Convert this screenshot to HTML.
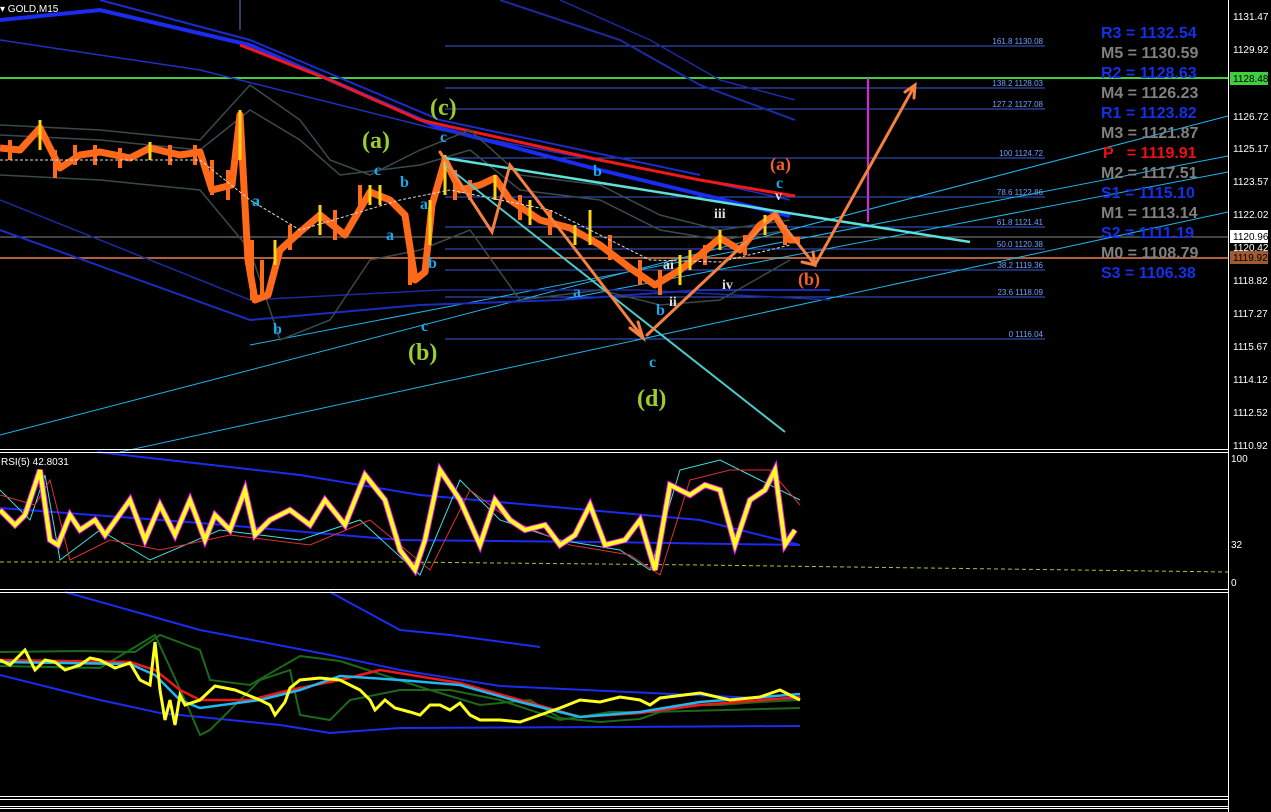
<!DOCTYPE html>
<html><head><meta charset="utf-8"><style>
html,body{margin:0;padding:0;background:#000;width:1271px;height:812px;overflow:hidden}
svg{display:block}
.ax{font-family:"Liberation Sans",sans-serif;font-size:10px;fill:#fff}
.pv{font-family:"Liberation Sans",sans-serif;font-size:16px;font-weight:bold}
.fb{font-family:"Liberation Sans",sans-serif;font-size:8px;fill:#6fa0ff}
.wv{font-family:"Liberation Serif",serif;font-weight:bold}
</style></head><body>
<svg width="1271" height="812" viewBox="0 0 1271 812" xmlns="http://www.w3.org/2000/svg">
<rect width="1271" height="812" fill="#000"/>
<g stroke="#3c5ad8" stroke-width="1">
<line x1="445" y1="46" x2="1045" y2="46"/>
<line x1="445" y1="88" x2="1045" y2="88"/>
<line x1="445" y1="109" x2="1045" y2="109"/>
<line x1="445" y1="158" x2="1045" y2="158"/>
<line x1="445" y1="197" x2="1045" y2="197"/>
<line x1="445" y1="227" x2="1045" y2="227"/>
<line x1="445" y1="249" x2="1045" y2="249"/>
<line x1="445" y1="270" x2="1045" y2="270"/>
<line x1="445" y1="297" x2="1045" y2="297"/>
<line x1="445" y1="339" x2="1045" y2="339"/>
</g>
<g class="fb" text-anchor="end">
<text x="1043" y="44">161.8 1130.08</text>
<text x="1043" y="86">138.2 1128.03</text>
<text x="1043" y="107">127.2 1127.08</text>
<text x="1043" y="156">100 1124.72</text>
<text x="1043" y="195">78.6 1122.86</text>
<text x="1043" y="225">61.8 1121.41</text>
<text x="1043" y="247">50.0 1120.38</text>
<text x="1043" y="268">38.2 1119.36</text>
<text x="1043" y="295">23.6 1118.09</text>
<text x="1043" y="337">0 1116.04</text>
</g>
<line x1="0" y1="78" x2="1228" y2="78" stroke="#3fcf3f" stroke-width="2"/>
<line x1="0" y1="237" x2="1228" y2="237" stroke="#888" stroke-width="1"/>
<line x1="0" y1="258" x2="1228" y2="258" stroke="#b0603a" stroke-width="2"/>
<g stroke="#1fb4e8" stroke-width="1" fill="none">
<line x1="0" y1="435" x2="1228" y2="116"/>
<line x1="250" y1="345" x2="1228" y2="156"/>
<line x1="120" y1="452" x2="1228" y2="212"/>
<line x1="560" y1="300" x2="1228" y2="172"/>
</g>
<g fill="none">
<path d="M0,20 L100,10 L250,45 L440,128 L600,170 L790,216" stroke="#1a2cf0" stroke-width="4"/>
<path d="M0,40 L200,70 L440,130 L700,180 L790,200" stroke="#2030c0" stroke-width="1.5"/>
<path d="M100,0 L250,40 L440,120 L700,175" stroke="#1a2cd0" stroke-width="2"/>
<path d="M500,0 L620,40 L700,85 L795,120" stroke="#1a2aa0" stroke-width="2"/>
<path d="M560,0 L650,40 L720,80 L795,100" stroke="#1a2aa0" stroke-width="1.5"/>
<path d="M0,230 L250,320 L420,305 L560,300 L700,290 L830,290" stroke="#1a2cc0" stroke-width="2"/>
<path d="M0,200 L250,300 L440,290 L640,290 L830,300" stroke="#1a2aa0" stroke-width="1.5"/>
<path d="M240,45 L330,80 L420,120 L600,160 L700,180 L795,196" stroke="#f01818" stroke-width="3"/>
</g>
<g fill="none" stroke="#3a4a4a" stroke-width="1.5">
<path d="M0,125 L100,130 L200,140 L250,85 L300,120 L330,160 L370,175 L420,150 L470,130 L520,175 L600,185 L660,215 L720,230 L790,220"/>
<path d="M0,175 L100,180 L200,190 L250,250 L280,340 L330,320 L370,260 L420,250 L470,230 L520,300 L600,290 L660,305 L720,300 L790,260"/>
<path d="M0,135 L100,140 L200,150 L250,110 L300,140 L340,175 L420,165 L470,150 L520,190 L600,200 L660,230 L720,240 L790,230"/>
</g>
<polyline fill="none" stroke="#ff6a1a" stroke-width="7" stroke-linejoin="round" points="0,148 20,150 40,128 60,168 80,155 100,152 130,158 150,148 180,155 200,152 212,190 232,185 240,115 248,260 255,300 268,295 280,250 300,232 320,215 345,235 370,192 390,200 405,215 415,280 425,272 432,205 445,160 460,190 480,185 495,178 510,200 540,220 570,228 600,245 630,268 655,285 680,270 700,255 720,238 740,250 760,225 775,215 790,240 800,240"/>
<g stroke="#ff6a1a" stroke-width="4">
<line x1="10" y1="140" x2="10" y2="160"/><line x1="55" y1="150" x2="55" y2="178"/><line x1="75" y1="145" x2="75" y2="165"/>
<line x1="95" y1="145" x2="95" y2="165"/><line x1="120" y1="148" x2="120" y2="168"/><line x1="170" y1="145" x2="170" y2="165"/>
<line x1="195" y1="145" x2="195" y2="165"/><line x1="212" y1="160" x2="212" y2="195"/><line x1="228" y1="170" x2="228" y2="200"/>
<line x1="252" y1="240" x2="252" y2="300"/><line x1="262" y1="260" x2="262" y2="295"/><line x1="290" y1="225" x2="290" y2="250"/>
<line x1="335" y1="210" x2="335" y2="240"/><line x1="360" y1="185" x2="360" y2="210"/><line x1="410" y1="240" x2="410" y2="285"/>
<line x1="455" y1="170" x2="455" y2="200"/><line x1="470" y1="180" x2="470" y2="200"/><line x1="520" y1="195" x2="520" y2="220"/>
<line x1="550" y1="210" x2="550" y2="235"/><line x1="610" y1="235" x2="610" y2="260"/><line x1="640" y1="260" x2="640" y2="285"/>
<line x1="660" y1="270" x2="660" y2="295"/><line x1="705" y1="245" x2="705" y2="265"/><line x1="745" y1="235" x2="745" y2="255"/>
<line x1="785" y1="225" x2="785" y2="245"/>
</g>
<g stroke="#ffd21a" stroke-width="3">
<line x1="40" y1="120" x2="40" y2="150"/><line x1="150" y1="142" x2="150" y2="160"/><line x1="240" y1="110" x2="240" y2="160"/>
<line x1="320" y1="205" x2="320" y2="235"/><line x1="370" y1="185" x2="370" y2="205"/><line x1="430" y1="200" x2="430" y2="245"/>
<line x1="445" y1="155" x2="445" y2="195"/><line x1="495" y1="175" x2="495" y2="200"/><line x1="590" y1="210" x2="590" y2="245"/>
<line x1="680" y1="255" x2="680" y2="285"/><line x1="720" y1="230" x2="720" y2="250"/><line x1="765" y1="215" x2="765" y2="235"/>
<line x1="275" y1="240" x2="275" y2="265"/><line x1="380" y1="185" x2="380" y2="205"/><line x1="530" y1="200" x2="530" y2="225"/>
<line x1="575" y1="225" x2="575" y2="245"/><line x1="690" y1="250" x2="690" y2="270"/>
</g>
<path d="M0,160 L200,160 L250,200 L300,230 L400,200 L450,190 L550,210 L650,260 L720,262 L790,245" fill="none" stroke="#ddd" stroke-width="1" stroke-dasharray="3,2"/>
<line x1="445" y1="158" x2="970" y2="242" stroke="#5de0d8" stroke-width="2.5"/>
<line x1="445" y1="165" x2="785" y2="432" stroke="#4fc8c8" stroke-width="2"/>
<line x1="868" y1="78" x2="868" y2="222" stroke="#e020e0" stroke-width="2"/>
<line x1="240" y1="0" x2="240" y2="30" stroke="#6080c0" stroke-width="1"/>
<g stroke="#f58040" stroke-width="3" fill="none" stroke-linecap="round">
<polyline points="440,152 492,232 510,165 585,262 643,338"/>
<polyline points="647,335 775,215 815,265 915,85"/>
<polyline points="630,328 643,338 638,322"/>
<polyline points="905,92 915,85 914,98"/>
<polyline points="802,262 815,265 813,252"/>
</g>
<g class="wv" fill="#9acd32" font-size="24">
<text x="362" y="148">(a)</text><text x="430" y="115">(c)</text><text x="408" y="360">(b)</text><text x="637" y="406">(d)</text>
</g>
<g class="wv" fill="#f06030" font-size="18">
<text x="770" y="170">(a)</text><text x="798" y="285">(b)</text>
</g>
<g class="wv" fill="#1aa8f0" font-size="16">
<text x="440" y="142">c</text><text x="374" y="175">c</text><text x="400" y="187">b</text><text x="420" y="209">a</text>
<text x="386" y="240">a</text><text x="428" y="268">b</text><text x="421" y="331">c</text><text x="252" y="206">a</text>
<text x="273" y="334">b</text><text x="593" y="176">b</text><text x="573" y="297">a</text><text x="656" y="315">b</text>
<text x="649" y="367">c</text><text x="776" y="188">c</text>
</g>
<g class="wv" fill="#ddd" font-size="14">
<text x="663" y="269">ai</text><text x="669" y="306">ii</text><text x="714" y="218">iii</text><text x="722" y="289">iv</text><text x="775" y="200">v</text>
</g>
<text x="0" y="12" class="ax" font-size="9">▾ GOLD,M15</text>
<g class="pv">
<text x="1101" y="38" fill="#1530e8">R3 = 1132.54</text>
<text x="1101" y="58" fill="#808080">M5 = 1130.59</text>
<text x="1101" y="78" fill="#1530e8">R2 = 1128.63</text>
<text x="1101" y="98" fill="#808080">M4 = 1126.23</text>
<text x="1101" y="118" fill="#1530e8">R1 = 1123.82</text>
<text x="1101" y="138" fill="#808080">M3 = 1121.87</text>
<text x="1103" y="158" fill="#f01010">P &#160; = 1119.91</text>
<text x="1101" y="178" fill="#808080">M2 = 1117.51</text>
<text x="1101" y="198" fill="#1530e8">S1 = 1115.10</text>
<text x="1101" y="218" fill="#808080">M1 = 1113.14</text>
<text x="1101" y="238" fill="#1530e8">S2 = 1111.19</text>
<text x="1101" y="258" fill="#808080">M0 = 1108.79</text>
<text x="1101" y="278" fill="#1530e8">S3 = 1106.38</text>
</g>
<g fill="none">
<path d="M97,452 L300,475 L420,495 L700,520 L800,545" stroke="#1a2cf0" stroke-width="2"/>
<path d="M0,508 L200,523 L400,540 L600,542 L800,545" stroke="#1a2cf0" stroke-width="2"/>
<path d="M0,562 L400,562 L700,565 L1228,572" stroke="#9acd32" stroke-width="1" stroke-dasharray="4,3"/>
<path d="M0,490 L30,520 L45,475 L60,560 L100,530 L150,560 L220,530 L300,540 L360,520 L420,575 L460,480 L500,520 L560,540 L620,550 L650,570 L680,470 L720,460 L760,480 L800,500" stroke="#3fe0e0" stroke-width="1"/>
<path d="M0,495 L35,505 L50,480 L70,560 L110,540 L160,550 L230,535 L310,545 L370,520 L430,570 L470,490 L510,520 L570,545 L630,555 L660,575 L690,480 L730,470 L770,470 L800,505" stroke="#e03030" stroke-width="1"/>
<polyline stroke="#ff20ff" stroke-width="6" points="0,510 15,525 25,515 40,470 50,540 58,545 70,515 80,530 95,520 105,535 130,500 145,540 160,505 175,535 190,500 205,540 215,515 230,530 245,490 255,535 270,520 290,510 310,525 325,500 345,525 365,475 385,500 400,550 415,570 425,540 440,470 460,500 480,545 495,500 510,520 525,530 545,525 560,545 575,535 590,505 605,545 625,540 640,520 655,570 670,485 690,495 705,485 720,490 735,545 750,500 765,490 775,470 785,545 795,530"/>
<polyline stroke="#ffff20" stroke-width="4" points="0,510 15,525 25,515 40,470 50,540 58,545 70,515 80,530 95,520 105,535 130,500 145,540 160,505 175,535 190,500 205,540 215,515 230,530 245,490 255,535 270,520 290,510 310,525 325,500 345,525 365,475 385,500 400,550 415,570 425,540 440,470 460,500 480,545 495,500 510,520 525,530 545,525 560,545 575,535 590,505 605,545 625,540 640,520 655,570 670,485 690,495 705,485 720,490 735,545 750,500 765,490 775,470 785,545 795,530"/>
</g>
<text x="1" y="465" class="ax">RSI(5) 42.8031</text>
<g fill="none">
<path d="M65,592 L200,630 L330,655 L400,670 L500,686 L800,700" stroke="#1a2cf0" stroke-width="2"/>
<path d="M330,592 L400,630 L450,635 L510,643 L540,647" stroke="#1a2cf0" stroke-width="2"/>
<path d="M0,675 L100,700 L160,713 L280,725 L330,733 L400,728 L800,726" stroke="#1a2cf0" stroke-width="2"/>
<path d="M0,652 L80,651 L135,652 L160,635 L200,650 L210,680 L250,685 L300,656 L340,661 L380,674 L430,690 L480,705 L530,700 L560,718 L600,722 L640,719 L680,705 L720,705 L760,702 L800,700" stroke="#1a6a1a" stroke-width="2"/>
<path d="M0,666 L100,668 L155,635 L185,700 L200,735 L210,730 L260,680 L290,670 L300,715 L330,720 L350,700 L400,690 L450,690 L500,700 L560,720 L610,712 L650,712 L800,708" stroke="#1a6a1a" stroke-width="2"/>
<path d="M0,660 L130,662 L155,670 L180,690 L200,700 L250,700 L290,690 L340,680 L380,670 L460,683 L520,700 L580,717 L640,713 L700,705 L800,697" stroke="#f01818" stroke-width="2.5"/>
<path d="M0,662 L130,664 L155,675 L180,700 L200,708 L260,700 L300,690 L340,676 L400,680 L460,685 L520,702 L580,717 L640,712 L700,702 L800,694" stroke="#20b8f0" stroke-width="2.5"/>
<polyline stroke="#ffff20" stroke-width="3" points="0,660 10,665 20,655 25,650 35,670 45,660 55,662 65,670 80,665 90,658 100,660 115,668 130,663 140,680 150,685 155,642 160,690 165,720 170,700 175,725 180,695 185,705 200,700 215,686 235,690 260,700 270,705 275,715 285,702 290,688 300,680 320,678 340,680 360,690 370,700 375,710 385,700 395,708 410,712 420,715 430,705 440,705 450,710 460,703 470,715 480,720 500,720 520,722 540,715 560,708 580,700 600,702 620,697 640,700 650,705 660,698 700,693 730,700 760,697 780,690 800,700"/>
</g>
<g stroke="#fff" stroke-width="1" fill="none">
<line x1="0" y1="449.5" x2="1228" y2="449.5"/><line x1="0" y1="452.5" x2="1228" y2="452.5"/>
<line x1="0" y1="589.5" x2="1228" y2="589.5"/><line x1="0" y1="592.5" x2="1228" y2="592.5"/>
<line x1="0" y1="796.5" x2="1228" y2="796.5"/><line x1="0" y1="799.5" x2="1228" y2="799.5"/>
<line x1="0" y1="806.5" x2="1228" y2="806.5"/><line x1="0" y1="808.5" x2="1228" y2="808.5"/>
<line x1="1228.5" y1="0" x2="1228.5" y2="812"/>
</g>
<g class="ax">
<text x="1233" y="20">1131.47</text><text x="1233" y="53">1129.92</text>
<text x="1233" y="120">1126.72</text><text x="1233" y="152">1125.17</text>
<text x="1233" y="185">1123.57</text><text x="1233" y="218">1122.02</text>
<text x="1233" y="251">1120.42</text><text x="1233" y="284">1118.82</text>
<text x="1233" y="350">1115.67</text><text x="1233" y="383">1114.12</text>
<text x="1233" y="416">1112.52</text><text x="1233" y="449">1110.92</text>
<text x="1231" y="462">100</text><text x="1231" y="548">32</text><text x="1231" y="586">0</text>
<text x="1233" y="317">1117.27</text>
</g>
<rect x="1230" y="72" width="38" height="13" fill="#3fcf3f"/><text x="1233" y="82" class="ax" style="fill:#000">1128.48</text>
<rect x="1230" y="230" width="38" height="13" fill="#fff"/><text x="1233" y="240" class="ax" style="fill:#000">1120.96</text>
<rect x="1230" y="251" width="38" height="13" fill="#a05a30"/><text x="1233" y="261" class="ax" style="fill:#000">1119.92</text>
</svg>
</body></html>
